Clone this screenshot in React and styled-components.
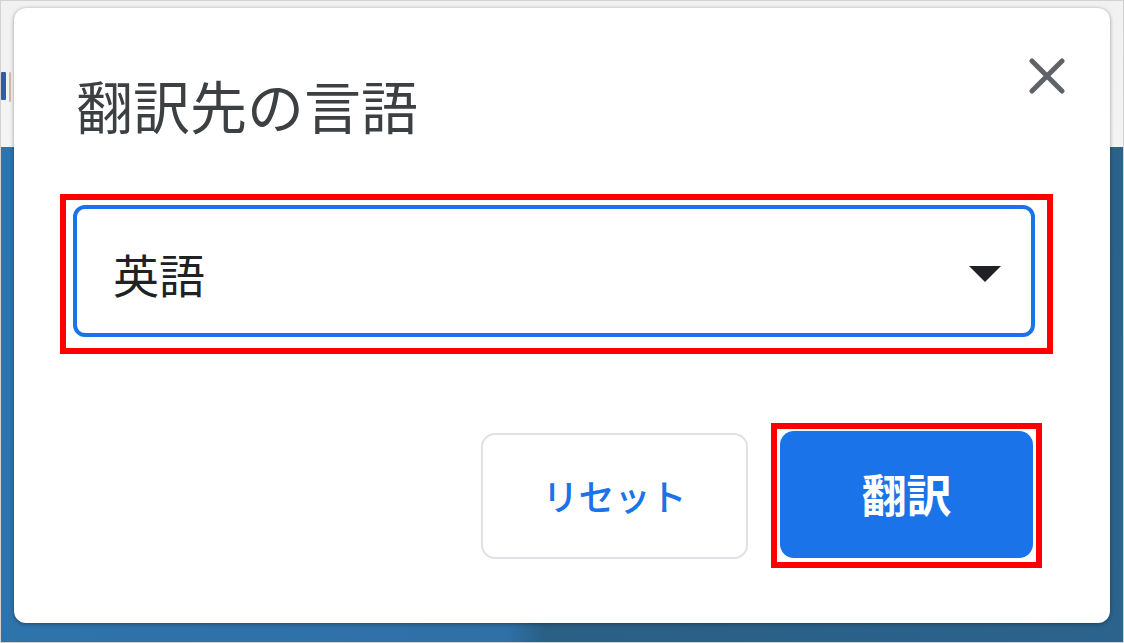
import React from 'react'
import styled, { createGlobalStyle } from 'styled-components'

const GlobalStyle = createGlobalStyle`
  html, body {
    margin: 0;
    padding: 0;
    background: #ffffff;
  }
  * {
    box-sizing: border-box;
  }
`

const Frame = styled.div`
  width: 1124px;
  height: 643px;
  border: 1px solid #d2d2d2;
  display: flex;
  padding: 7px 13px 0 0;
  overflow: hidden;
  font-family: 'Noto Sans CJK JP', 'Noto Sans', sans-serif;
  background:
    linear-gradient(to bottom, #f1f1f1 0, #f4f4f4 146px, transparent 146px),
    linear-gradient(100deg, #2f74ad 0%, #2f70a6 50%, #2a5f86 53%, #2b638d 100%);
`

// sliver of the page behind the dialog
const PageEdge = styled.div`
  width: 13px;
  flex-shrink: 0;
  display: flex;
  justify-content: flex-start;
  align-items: flex-start;
  gap: 3px;
  padding-top: 64px;
`

const EdgeMark = styled.div`
  width: ${props => props.width}px;
  height: ${props => props.height}px;
  background: ${props => props.color};
  border-radius: 1px;
`

const Dialog = styled.div`
  width: 1096px;
  height: 615px;
  background: #ffffff;
  border-radius: 12px;
  box-shadow: 0 1px 4px rgba(0, 0, 0, 0.35), 0 0 1px rgba(0, 0, 0, 0.2);
  padding: 0 57px 0 46px;
  display: flex;
  flex-direction: column;
`

const Header = styled.div`
  display: flex;
  justify-content: space-between;
  align-items: flex-start;
  padding-top: 67px;
`

const Title = styled.h1`
  margin: 0 0 0 16px;
  font-size: 57px;
  font-weight: 400;
  line-height: 58px;
  color: #3c4043;
  letter-spacing: 0;
`

const CloseButton = styled.div`
  width: 36px;
  height: 36px;
  margin: -17px -12px 0 0;
  display: flex;
  align-items: center;
  justify-content: center;
`

const Highlight = styled.div`
  border: 6px solid #ff0000;
  padding: ${props => props.pad};
`

const SelectWrap = styled(Highlight)`
  margin-top: 61px;
`

const Select = styled.div`
  height: 132px;
  border: 4px solid #1a73e8;
  border-radius: 12px;
  display: flex;
  align-items: center;
  justify-content: space-between;
  padding: 0 30px 0 36px;
`

const SelectText = styled.span`
  font-size: 46px;
  line-height: 1;
  color: #202124;
  margin-top: 3px;
`

const Caret = styled.div`
  width: 0;
  height: 0;
  border-left: 16px solid transparent;
  border-right: 16px solid transparent;
  border-top: 16px solid #202124;
  margin-top: 5px;
`

const Actions = styled.div`
  display: flex;
  justify-content: flex-end;
  align-items: center;
  gap: 23px;
  margin: 69px 11px 0 0;
`

const Button = styled.div`
  width: ${props => props.width}px;
  height: ${props => props.height}px;
  border-radius: 14px;
  display: flex;
  align-items: center;
  justify-content: center;
  font-size: ${props => props.size}px;
  line-height: 1;
  font-weight: ${props => (props.primary ? 700 : 500)};
  color: ${props => (props.primary ? '#ffffff' : '#1a73e8')};
  background: ${props => (props.primary ? '#1a73e8' : '#ffffff')};
  border: ${props => (props.primary ? 'none' : '2px solid #dfe1e5')};
  padding-bottom: 2px;
`

const CloseIcon = () => (
  <svg width="36" height="36" viewBox="0 0 36 36">
    <path
      d="M3 3 L33 33 M33 3 L3 33"
      stroke="#5f6368"
      strokeWidth="5"
      strokeLinecap="round"
      fill="none"
    />
  </svg>
)

const App = () => {
  return (
    <>
      <GlobalStyle />
      <Frame>
        <PageEdge>
          <EdgeMark width={5} height={28} color="#2b5fa8" />
          <EdgeMark width={2} height={30} color="#d9b7a0" />
        </PageEdge>
        <Dialog>
          <Header>
            <Title>翻訳先の言語</Title>
            <CloseButton>
              <CloseIcon />
            </CloseButton>
          </Header>
          <SelectWrap pad="5px 12px 11px 7px">
            <Select>
              <SelectText>英語</SelectText>
              <Caret />
            </Select>
          </SelectWrap>
          <Actions>
            <Button width={267} height={126} size={36}>
              リセット
            </Button>
            <Highlight pad="2px 3px 4px 3px">
              <Button primary width={253} height={127} size={45}>
                翻訳
              </Button>
            </Highlight>
          </Actions>
        </Dialog>
      </Frame>
    </>
  )
}

export default App
